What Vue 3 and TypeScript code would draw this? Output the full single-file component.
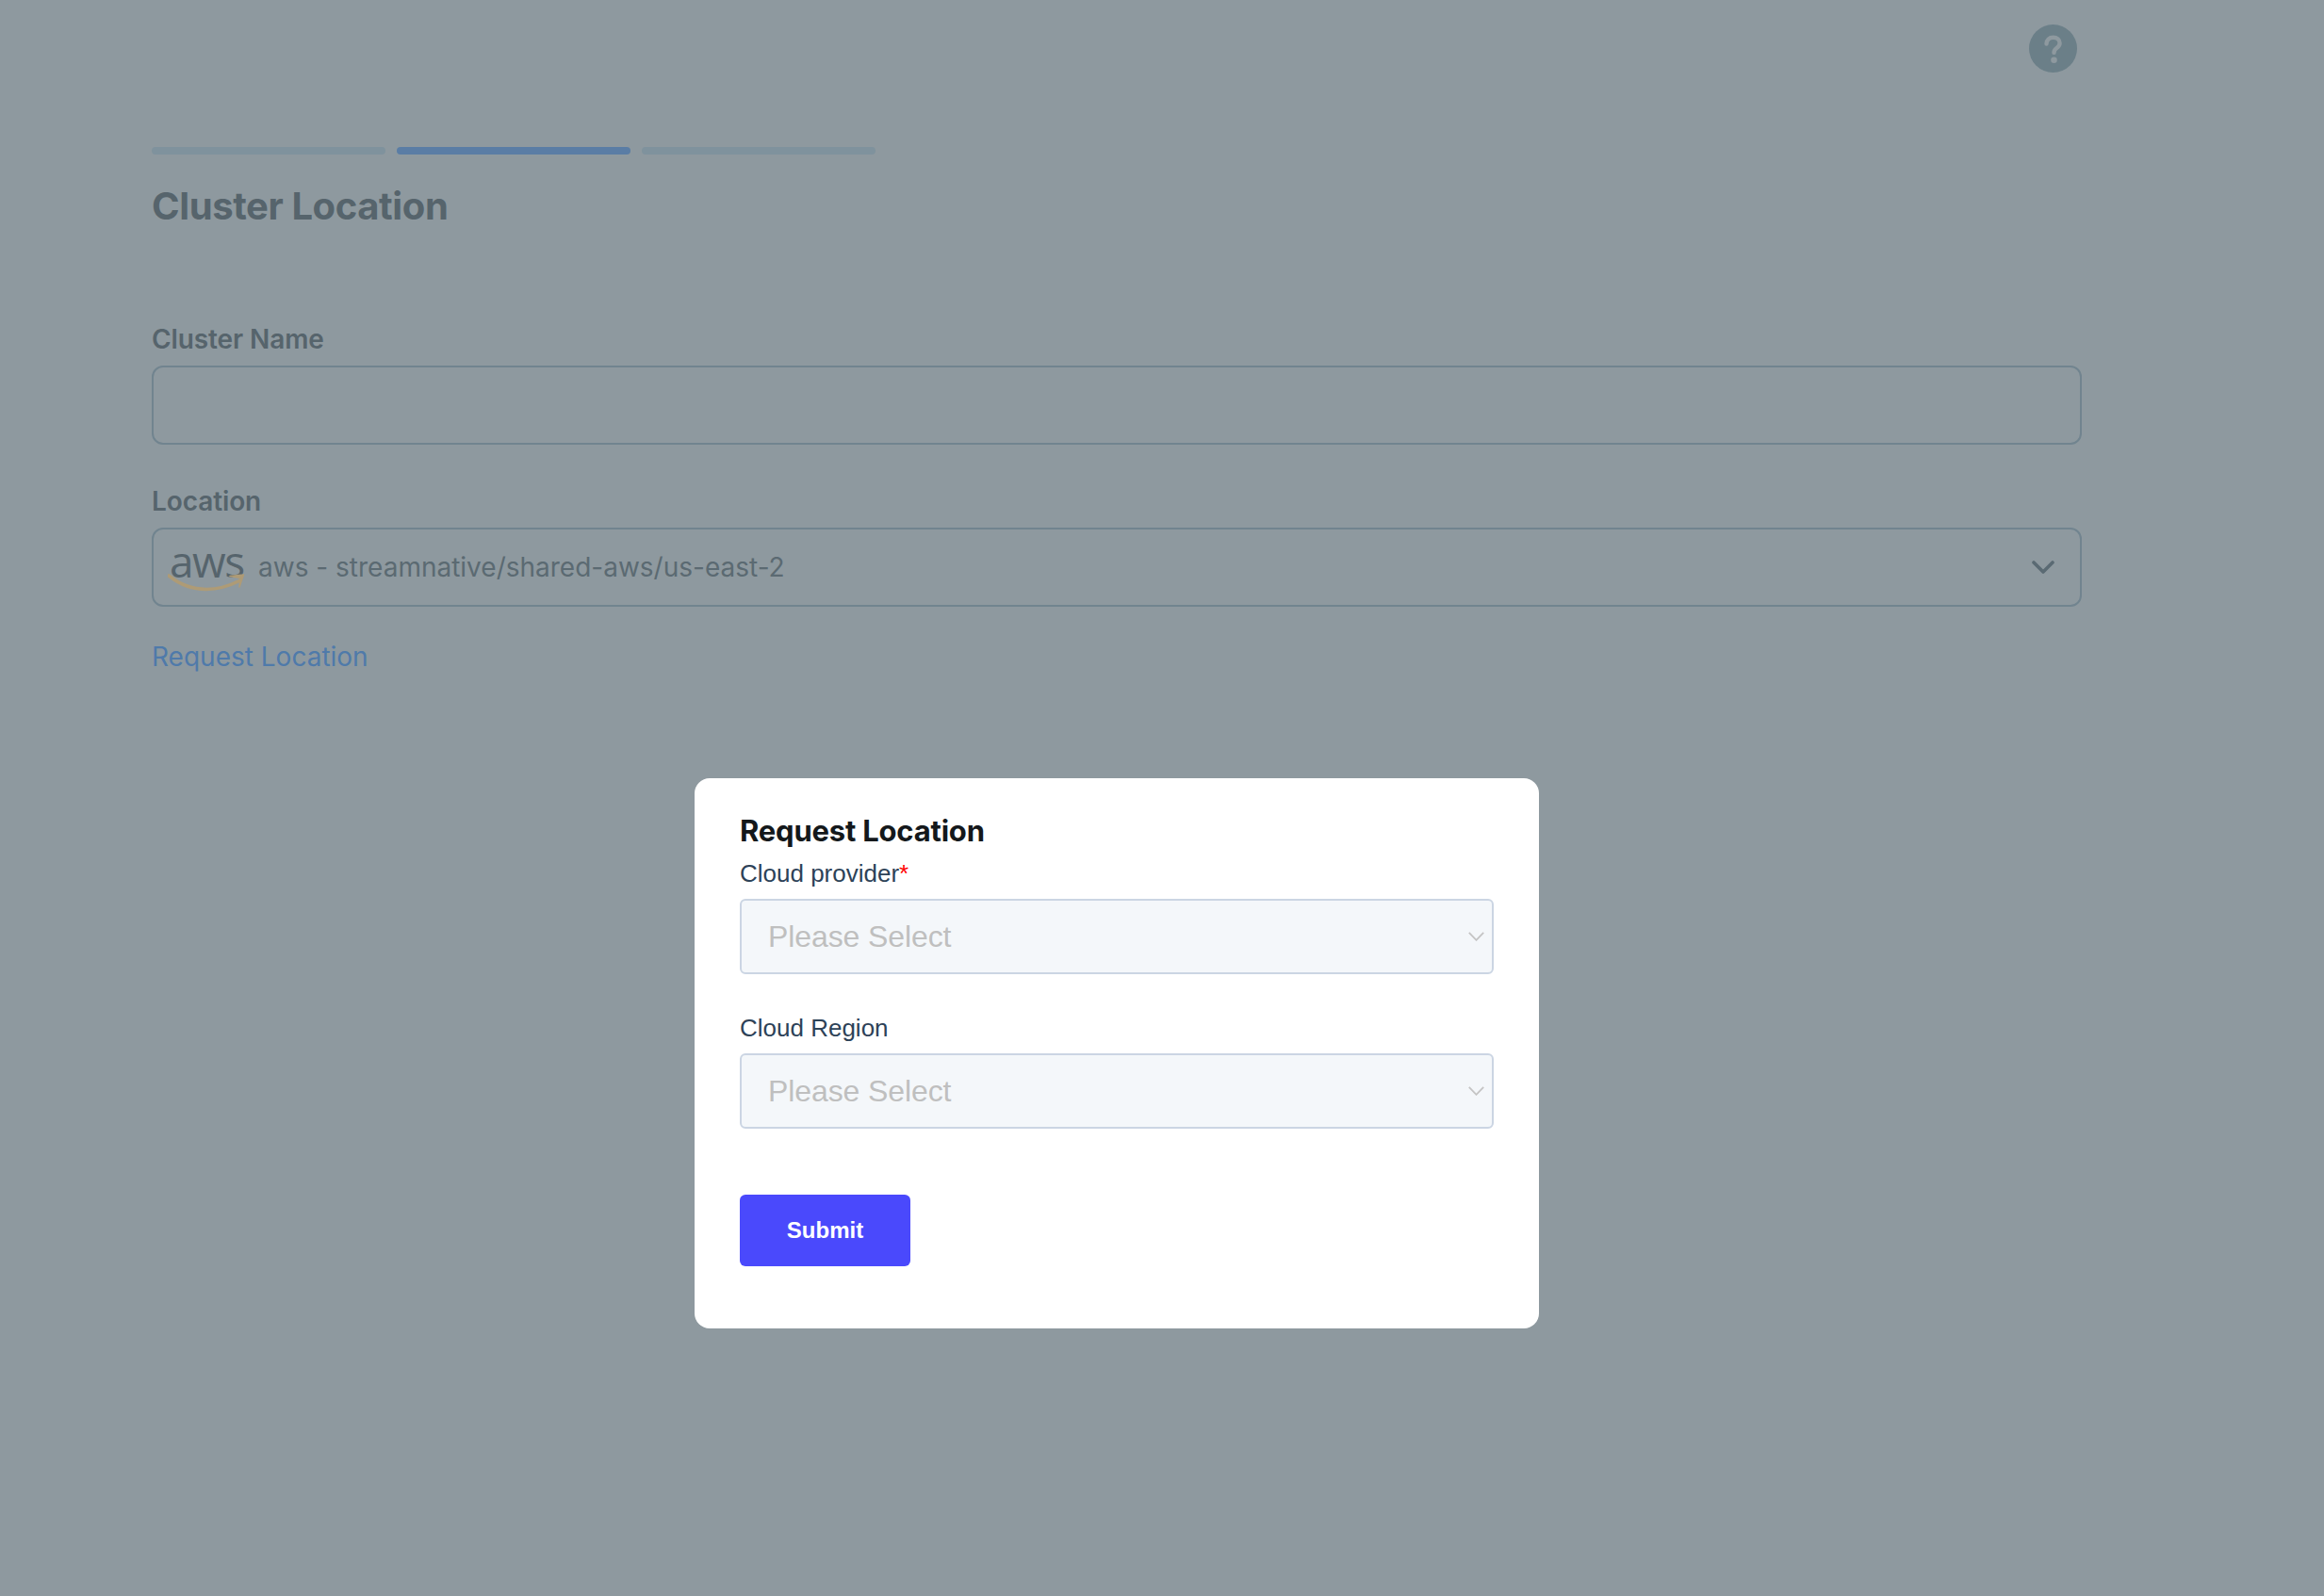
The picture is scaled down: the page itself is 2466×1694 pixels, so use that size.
<script setup lang="ts">
const steps: boolean[] = [false, true, false]
const fields: { label: string; required: boolean }[] = [
  { label: 'Cloud provider', required: true },
  { label: 'Cloud Region', required: false },
]
</script>

<template>
  <div class="page">
    <header class="top">
      <svg class="help" viewBox="0 0 51 51" aria-label="Help">
        <circle cx="25.5" cy="25.5" r="25.5" fill="#6b7f88" />
        <path d="M18.5 20.5c0-4.200 3-6.800 7.200-6.800 4 0 6.900 2.500 6.900 6 0 2.600-1.400 4-3.300 5.400-1.900 1.400-2.800 2.300-2.800 4.800" fill="none" stroke="#8e999f" stroke-width="4.400" stroke-linecap="round" />
        <circle cx="26.500" cy="37.800" r="3.300" fill="#8e999f" />
      </svg>
    </header>

    <div class="steps">
      <span v-for="(on, i) in steps" :key="i" class="step" :class="{ on }"></span>
    </div>

    <h1 class="title">Cluster Location</h1>

    <label class="label first">Cluster Name</label>
    <input class="box" type="text" />

    <label class="label second">Location</label>
    <div class="box loc">
      <div class="aws">
        <span class="aws-text">aws</span>
        <svg class="smile" viewBox="0 0 82 20" aria-hidden="true">
          <path d="M1 2C12 11 26 16.500 41 16.500c12 0 23-3 35-9" fill="none" stroke="#ae9b76" stroke-width="3.600" stroke-linecap="round" />
          <path d="M66 2.500l14.500-1.500-4.500 13 1-9.500z" fill="#ae9b76" stroke="#ae9b76" stroke-width="1.500" stroke-linejoin="round" />
        </svg>
      </div>
      <span class="loc-text">aws - streamnative/shared-aws/us-east-2</span>
      <svg class="chev" viewBox="0 0 24 14" aria-hidden="true">
        <path d="M2 2l10 10L22 2" fill="none" stroke="#5a6a73" stroke-width="3.600" stroke-linecap="round" stroke-linejoin="round" />
      </svg>
    </div>

    <a class="link">Request Location</a>

    <div class="overlay">
      <div class="dialog">
        <h2 class="dialog-title">Request Location</h2>
        <div v-for="(f, i) in fields" :key="f.label" class="field" :class="{ later: i > 0 }">
          <div class="field-label">{{ f.label }}<span v-if="f.required" class="req">*</span></div>
          <div class="select">
            <span class="placeholder">Please Select</span>
            <svg class="select-chev" viewBox="0 0 17 10" aria-hidden="true">
              <path d="M.8 .8l7.700 8 7.700-8" fill="none" stroke="#c4c4c4" stroke-width="1.800" />
            </svg>
          </div>
        </div>
        <button class="submit" type="button">Submit</button>
      </div>
    </div>
  </div>
</template>

<style>
html, body { margin: 0; background: #8e999f; }
</style>

<style scoped>
.page {
  position: relative;
  box-sizing: border-box;
  width: 2466px;
  height: 1694px;
  padding: 0 257px 0 161px;
  background: #8e999f;
  display: flex;
  flex-direction: column;
  font-family: Inter, "Liberation Sans", sans-serif;
  overflow: hidden;
}
.top {
  display: flex;
  justify-content: flex-end;
  padding: 26px 5px 0 0;
  height: 51px;
}
.help { width: 51px; height: 51px; }
.steps {
  display: flex;
  gap: 12px;
  margin-top: 79px;
}
.step {
  width: 248px;
  height: 8px;
  border-radius: 4px;
  background: #7f929d;
}
.step.on { background: #5a7da5; }
.title {
  margin: 31px 0 0;
  font-size: 40px;
  line-height: 48px;
  font-weight: 700;
  color: #56646c;
  letter-spacing: -.4px;
}
.label {
  display: block;
  font-size: 28px;
  line-height: 34px;
  font-weight: 600;
  letter-spacing: -.1px;
  color: #56646c;
}
.label.first { margin-top: 100px; }
.label.second { margin-top: 44px; }
.box {
  box-sizing: border-box;
  display: flex;
  align-items: center;
  width: 2048px;
  height: 84px;
  margin: 11px 0 0;
  border: 2.500px solid #71848f;
  border-radius: 12px;
  background: transparent;
  outline: none;
}
.label.second { margin-top: 43px; }
.loc { padding-left: 15px; }
.aws { position: relative; width: 82px; height: 52px; flex: none; margin-top: 1px; }
.aws-text {
  display: block;
  font-family: "Open Sans", "Noto Sans", sans-serif;
  font-size: 46px;
  line-height: 36px;
  font-weight: 500;
  letter-spacing: -1.500px;
  padding-left: 2px;
  color: #56646c;
}
.smile { position: absolute; left: 0; top: 32px; width: 82px; height: 20px; }
.loc-text {
  margin-left: 14px;
  font-size: 28px;
  line-height: 34px;
  color: #5b6a72;
}
.chev { width: 24px; height: 14px; margin-left: auto; margin-right: 27px; }
.link {
  margin-top: 36px;
  font-size: 28px;
  line-height: 34px;
  color: #4f7aaa;
}
.overlay {
  position: absolute;
  inset: 0;
  box-sizing: border-box;
  padding: 826px 0 0 737px;
}
.dialog {
  box-sizing: border-box;
  width: 896px;
  height: 584px;
  padding: 36px 48px 0;
  background: #fff;
  border-radius: 16px;
}
.dialog-title {
  margin: 0;
  font-size: 31px;
  line-height: 40px;
  font-weight: 700;
  letter-spacing: -.2px;
  color: #14181b;
}
.field { margin-top: 9px; }
.field.later { margin-top: 41px; }
.field-label {
  font-family: "Liberation Sans", Arial, sans-serif;
  font-size: 26px;
  line-height: 32px;
  color: #2d4258;
}
.req { color: #f00; }
.select {
  box-sizing: border-box;
  display: flex;
  align-items: center;
  justify-content: space-between;
  height: 80px;
  margin-top: 11px;
  padding: 0 8px 0 28px;
  background: #f4f7fa;
  border: 2px solid #cbd5e3;
  border-radius: 6px;
}
.placeholder {
  font-family: "Liberation Sans", Arial, sans-serif;
  font-size: 32px;
  letter-spacing: -.1px;
  color: #bfbfbf;
}
.select-chev { width: 17px; height: 10px; }
.submit {
  display: block;
  width: 181px;
  height: 76px;
  margin-top: 70px;
  padding: 0;
  border: 0;
  border-radius: 6px;
  background: #4a49fc;
  color: #fff;
  font-family: "Liberation Sans", Arial, sans-serif;
  font-size: 24px;
  font-weight: 700;
}
</style>
